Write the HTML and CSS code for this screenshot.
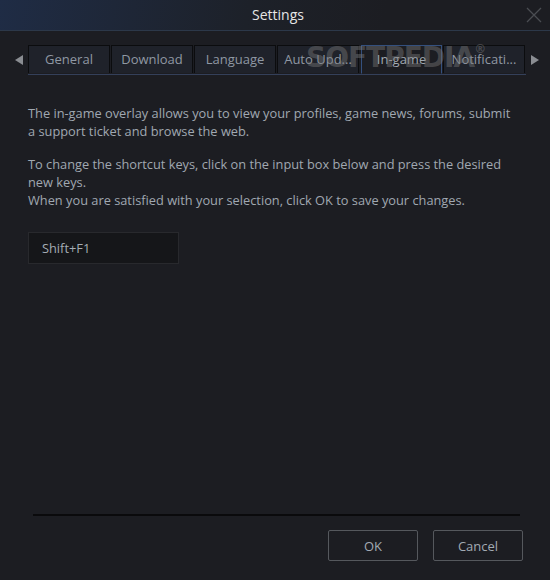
FILE: index.html
```html
<!DOCTYPE html>
<html>
<head>
<meta charset="utf-8">
<link rel="stylesheet" href="styles.css">
</head>
<body>
<div class="window">
  <div class="titlebar">
    <span class="title">Settings</span>
    <svg class="close" width="16" height="16" viewBox="0 0 16 16"><path d="M1 1 L15 15 M15 1 L1 15" stroke="#4a4d52" stroke-width="1.3" fill="none"/></svg>
  </div>
  <div class="tabrow">
    <svg class="arrow" width="8" height="10" viewBox="0 0 8 10"><path d="M8 0 L0 5 L8 10 Z" fill="#8a8d92"/></svg>
    <div class="tabs">
      <div class="tab">General</div>
      <div class="tab">Download</div>
      <div class="tab">Language</div>
      <div class="tab">Auto Upd...</div>
      <div class="tab active">In-game</div>
      <div class="tab">Notificati...</div>
      <div class="watermark">SOFTPEDIA<sup>®</sup></div>
    </div>
    <svg class="arrow" width="8" height="10" viewBox="0 0 8 10"><path d="M0 0 L8 5 L0 10 Z" fill="#8a8d92"/></svg>
  </div>
  <div class="content">
    <p>The in-game overlay allows you to view your profiles, game news, forums, submit a support ticket and browse the web.</p>
    <p>To change the shortcut keys, click on the input box below and press the desired new keys.<br>When you are satisfied with your selection, click OK to save your changes.</p>
    <div class="keybox">Shift+F1</div>
  </div>
  <div class="footer">
    <div class="sep"></div>
    <div class="buttons">
      <div class="btn">OK</div>
      <div class="btn">Cancel</div>
    </div>
  </div>
</div>
</body>
</html>
```
FILE: styles.css
```css
html, body {
  margin: 0;
  padding: 0;
  background: #1c1d22;
}
.window {
  width: 550px;
  height: 580px;
  display: flex;
  flex-direction: column;
  background: #1c1d22;
  font-family: "Open Sans", "Liberation Sans", sans-serif;
  color: #a0a8b1;
  overflow: hidden;
}
.titlebar {
  height: 30px;
  flex: none;
  display: flex;
  align-items: center;
  justify-content: center;
  position: relative;
  background: linear-gradient(100deg, #1f2c45 0%, #1d2129 45%, #1c1d22 70%);
  border-bottom: 1px solid #2c3849;
}
.title {
  color: #e6e6e6;
  font-size: 14px;
  margin-left: 6px;
  margin-top: -1px;
}
.close {
  position: absolute;
  right: 8px;
  top: 7px;
}
.tabrow {
  margin-top: 14px;
  height: 29px;
  display: flex;
  align-items: center;
  padding-left: 15px;
}
.arrow {
  flex: none;
}
.tabrow .arrow:first-child {
  margin-right: 5px;
  margin-top: 1px;
}
.tabrow .arrow:last-child {
  margin-left: 5px;
  margin-top: 1px;
}
.tabs {
  display: flex;
  position: relative;
  height: 29px;
  border-bottom: 1px solid #34405a;
}
.tab {
  width: 80px;
  height: 27px;
  margin-right: 1px;
  border: 1px solid #0b0c0e;
  border-bottom: none;
  background: #1f222a;
  display: flex;
  align-items: center;
  justify-content: center;
  font-size: 13px;
  color: #8f98a3;
  white-space: nowrap;
}
.tab.active {
  background: #1c1d22;
  border-color: #34507e;
  border-bottom: 1px solid #1c1d22;
  margin-bottom: -1px;
  color: #a2aab3;
  width: 79px;
  margin-left: 1px;
  margin-right: 1px;
}
.tab:last-of-type {
  margin-right: 0;
}
.watermark {
  position: absolute;
  left: 278px;
  top: -4px;
  font-family: "DejaVu Sans", sans-serif;
  font-weight: bold;
  font-size: 28px;
  letter-spacing: -1px;
  color: rgba(120, 120, 120, 0.45);
  pointer-events: none;
}
.watermark sup {
  font-size: 12px;
  vertical-align: 14px;
}
.content {
  flex: 1;
  padding: 30px 37px 0 28px;
  font-size: 12.8px;
  line-height: 18px;
}
.content p {
  margin: 0 0 15px 0;
}
.keybox {
  margin-top: 23px;
  width: 136px;
  height: 30px;
  padding-left: 13px;
  background: #151619;
  border: 1px solid #28292d;
  display: flex;
  align-items: center;
  color: #a4acb4;
}
.footer {
  flex: none;
  height: 66px;
}
.sep {
  margin: 0 30px 0 33px;
  height: 2px;
  background: #0a0a0c;
}
.buttons {
  display: flex;
  justify-content: flex-end;
  gap: 15px;
  padding: 14px 27px 0 0;
}
.btn {
  width: 88px;
  height: 29px;
  border: 1px solid #55585d;
  border-radius: 2px;
  display: flex;
  align-items: center;
  justify-content: center;
  font-size: 13px;
  color: #a2aab3;
}
```
